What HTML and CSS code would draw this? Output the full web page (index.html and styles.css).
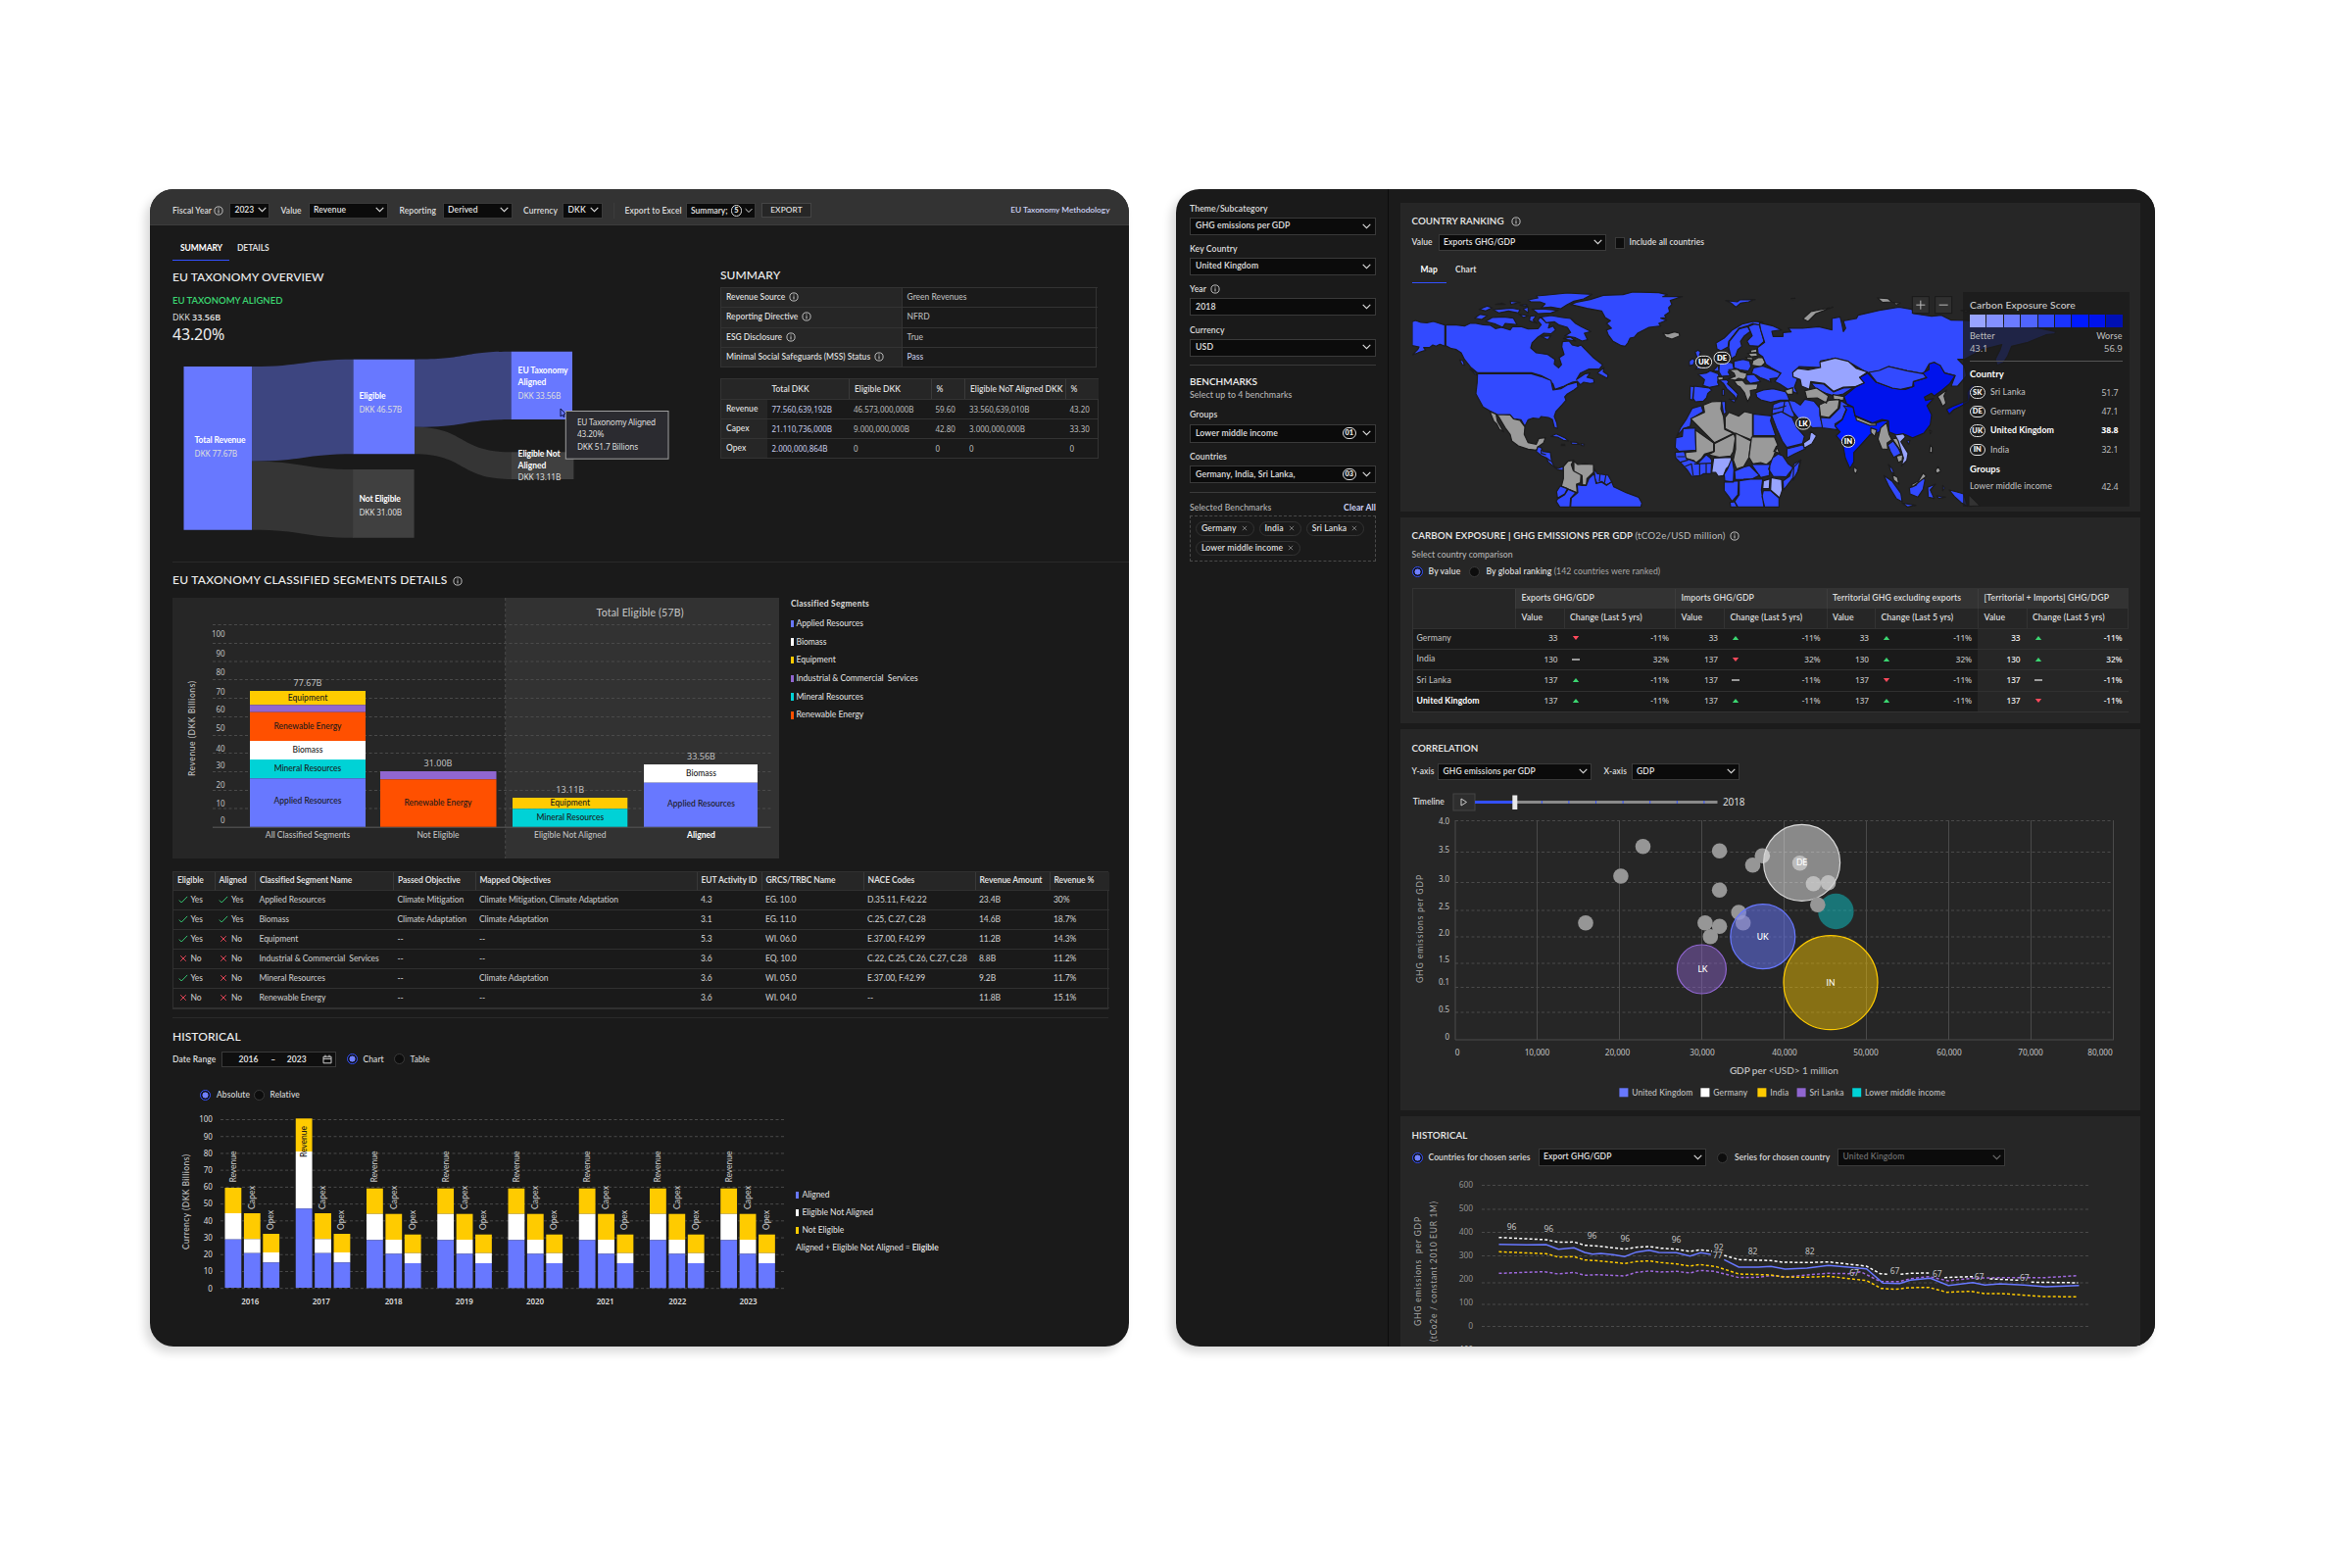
FILE: index.html
```html
<!DOCTYPE html>
<html lang="en">
<head>
<meta charset="utf-8">
<title>EU Taxonomy and GHG Exposure</title>
<link rel="stylesheet" href="styles.css">
</head>
<body>
<svg class="defs" aria-hidden="true">
  <symbol id="chev" viewBox="0 0 9 6"><path d="M.7.9 4.5 4.7 8.3.9" fill="none" stroke="currentColor" stroke-width="1.1"/></symbol>
  <symbol id="info" viewBox="0 0 10 10"><circle cx="5" cy="5" r="4.1" fill="none" stroke="currentColor" stroke-width=".9"/><path d="M5 4.3V7.4M5 2.5v1" stroke="currentColor" stroke-width="1"/></symbol>
  <symbol id="yes" viewBox="0 0 10 8"><path d="M.8 4.6 3.2 7 9.2.9" fill="none" stroke="#35c873" stroke-width="1"/></symbol>
  <symbol id="no" viewBox="0 0 10 8"><path d="M2.2 1.2 7.8 6.8M7.8 1.2 2.2 6.8" fill="none" stroke="#e04455" stroke-width="1"/></symbol>
  <symbol id="cal" viewBox="0 0 10 10"><path d="M1 2.2h8v6.6H1zM1 4.4h8M3 .6v2.2M7 .6v2.2" fill="none" stroke="currentColor" stroke-width="1"/></symbol>
  <symbol id="x" viewBox="0 0 6 6"><path d="M.8.8 5.2 5.2M5.2.8.8 5.2" stroke="#8a8a8a" stroke-width=".8"/></symbol>
</svg>
<main class="stage">

<section class="panel">
  <header class="topbar">
    <span class="lab">Fiscal Year <svg class="i"><use href="#info"/></svg></span><span class="sel">2023<svg class="c"><use href="#chev"/></svg></span>
    <span class="lab in">Value</span><span class="sel">Revenue<svg class="c"><use href="#chev"/></svg></span>
    <span class="lab in">Reporting</span><span class="sel">Derived<svg class="c"><use href="#chev"/></svg></span>
    <span class="lab in">Currency</span><span class="sel">DKK<svg class="c"><use href="#chev"/></svg></span>
    <i class="vbar"></i>
    <span class="lab">Export to Excel</span><span class="sel sum">Summary; <b class="ring">5</b><svg class="c"><use href="#chev"/></svg></span>
    <span class="btn">EXPORT</span>
    <a class="link">EU Taxonomy Methodology</a>
  </header>
  <div class="body">
    <nav class="tabs"><b class="on">SUMMARY</b><b>DETAILS</b></nav>
    <section class="overview">
      <div>
        <h2>EU TAXONOMY OVERVIEW</h2>
        <p class="green">EU TAXONOMY ALIGNED</p>
        <p class="dkk">DKK <b>33.56B</b></p>
        <p class="pct">43.20%</p>
        <svg class="sankey" viewBox="176 351 520 205">
          <path fill="#3d4580" d="M257 374C310 374 310 366.7 361 366.7V463.3C310 463.3 310 470.7 257 470.7ZM423 366.7C480 366.7 470 358.7 522 358.7V428C470 428 480 435.7 423 435.7Z"/>
          <path fill="#353535" d="M257 470.7C310 470.7 310 479 361 479V548.7C310 548.7 310 540.7 257 540.7ZM423 435.7C475 435.7 468 461.3 522 461.3V489C468 489 475 463.3 423 463.3Z"/>
          <path fill="#6878ff" d="M187.5 374H257V540.7H187.5ZM360.7 366.7H423V463.3H360.7ZM521.8 358.7H584V428H521.8Z"/>
          <path fill="#404040" d="M360.2 479H422.6V548.7H360.2ZM522 461.3H585.4V489H522Z"/>
          <g class="sk">
            <text x="198.5" y="451.5" class="m" textLength="52">Total Revenue</text><text x="198.5" y="465.7">DKK 77.67B</text>
            <text x="366.4" y="406.7" class="m">Eligible</text><text x="366.4" y="421.3">DKK 46.57B</text>
            <text x="366.4" y="511.7" class="m" textLength="42.5">Not Eligible</text><text x="366.4" y="526">DKK 31.00B</text>
            <text x="528.6" y="380.5" class="m" textLength="51">EU Taxonomy</text><text x="528.6" y="392.7" class="m">Aligned</text><text x="528.6" y="407.4">DKK 33.56B</text>
            <text x="528.6" y="465.5" class="m" textLength="43">Eligible Not</text><text x="528.6" y="478" class="m">Aligned</text><text x="528.6" y="490">DKK 13.11B</text>
          </g>
          <path d="M572 417v8l2-1.6 1.2 2.2 1-.6-1-2.2 2.2-.3z" fill="#6878ff" stroke="#0b1040" stroke-width="1"/>
          <rect x="577.3" y="419.5" width="104.7" height="48.7" fill="#2b2b30" stroke="#a0a0a0"/>
          <g class="sk"><text x="589" y="434" textLength="80">EU Taxonomy Aligned</text><text x="589" y="446.4">43.20%</text><text x="589" y="459" textLength="62">DKK 51.7 Billions</text></g>
        </svg>
      </div>
      <div class="sumcol">
        <h2>SUMMARY</h2>
        <div class="kv">
          <b>Revenue Source <svg class="i"><use href="#info"/></svg></b><span>Green Revenues</span>
          <b>Reporting Directive <svg class="i"><use href="#info"/></svg></b><span>NFRD</span>
          <b>ESG Disclosure <svg class="i"><use href="#info"/></svg></b><span>True</span>
          <b>Minimal Social Safeguards (MSS) Status <svg class="i"><use href="#info"/></svg></b><span class="lav">Pass</span>
        </div>
        <div class="fin">
          <b></b><b class="hd">Total DKK</b><b class="hd">Eligible DKK</b><b class="hd">%</b><b class="hd">Eligible NoT Aligned DKK</b><b class="hd">%</b>
          <b>Revenue</b><span class="lav">77.560,639,192B</span><span>46.573,000,000B</span><span>59.60</span><span>33.560,639,010B</span><span>43.20</span>
          <b>Capex</b><span class="lav">21.110,736,000B</span><span>9.000,000,000B</span><span>42.80</span><span>3.000,000,000B</span><span>33.30</span>
          <b>Opex</b><span class="lav">2.000,000,864B</span><span>0</span><span>0</span><span>0</span><span>0</span>
        </div>
      </div>
    </section>
    <section class="segments">
      <h2>EU TAXONOMY CLASSIFIED SEGMENTS DETAILS <svg class="i"><use href="#info"/></svg></h2>
      <div class="segrow">
        <svg id="segchart" class="segchart" viewBox="176 610 619 266"></svg>
        <ul class="legend">
          <li class="t">Classified Segments</li>
          <li class="blue">Applied Resources</li><li class="white">Biomass</li><li class="yellow">Equipment</li>
          <li class="purple">Industrial &amp; Commercial&nbsp; Services</li><li class="cyan">Mineral Resources</li><li class="orange">Renewable Energy</li>
        </ul>
      </div>
      <div class="seg" id="segtable"></div>
    </section>
    <section class="hist">
      <h2>HISTORICAL</h2>
      <div class="daterow"><span class="lab">Date Range</span><span class="date"><b>2016</b><b>–</b><b>2023</b><svg class="i"><use href="#cal"/></svg></span><i class="radio on"></i><span>Chart</span><i class="radio"></i><span>Table</span></div>
      <div class="absrow"><i class="radio on"></i><span>Absolute</span><i class="radio"></i><span>Relative</span></div>
      <div class="histrow">
        <svg id="histchart" class="histchart" viewBox="176 1126 630 220"></svg>
        <ul class="legend">
          <li class="blue">Aligned</li><li class="white">Eligible Not Aligned</li><li class="yellow">Not Eligible</li>
          <li class="plain">Aligned + Eligible Not Aligned = <b>Eligible</b></li>
        </ul>
      </div>
    </section>
  </div>
</section>

<section class="panel split">
  <aside class="side">
    <div class="field"><label>Theme/Subcategory</label><span class="sel">GHG emissions per GDP<svg class="c"><use href="#chev"/></svg></span></div>
    <div class="field"><label>Key Country</label><span class="sel">United Kingdom<svg class="c"><use href="#chev"/></svg></span></div>
    <div class="field"><label>Year &nbsp;<svg class="i"><use href="#info"/></svg></label><span class="sel">2018<svg class="c"><use href="#chev"/></svg></span></div>
    <div class="field"><label>Currency</label><span class="sel">USD<svg class="c"><use href="#chev"/></svg></span></div>
    <hr>
    <h3>BENCHMARKS</h3>
    <p>Select up to 4 benchmarks</p>
    <div class="field g"><label>Groups</label><span class="sel">Lower middle income<b class="ring">01</b><svg class="c"><use href="#chev"/></svg></span></div>
    <div class="field k"><label>Countries</label><span class="sel">Germany, India, Sri Lanka,<b class="ring">03</b><svg class="c"><use href="#chev"/></svg></span></div>
    <hr>
    <div class="selhead"><span>Selected Benchmarks</span><a>Clear All</a></div>
    <div class="chips"><span>Germany <svg><use href="#x"/></svg></span><span>India <svg><use href="#x"/></svg></span><span>Sri Lanka <svg><use href="#x"/></svg></span><span>Lower middle income <svg><use href="#x"/></svg></span></div>
  </aside>
  <div class="cards">
    <article class="card ranking">
      <h3>COUNTRY RANKING <svg class="i"><use href="#info"/></svg></h3>
      <div class="ctl"><span class="lab">Value</span><span class="sel w171">Exports GHG/GDP<svg class="c"><use href="#chev"/></svg></span><i class="box"></i><span class="lab">Include all countries</span></div>
      <nav class="tabs small"><b class="on">Map</b><b>Chart</b></nav>
      <div class="mapwrap">
        <svg class="map" viewBox="45 321 2196 663">
          <g class="land">
            <path d="M45 415L55 411 72 417 90 418 110 414 145 425V490L130 484 118 490 108 486 98 494 80 494 86 502 70 507 45 517 62 500 66 492 45 488Z"/>
            <path d="M148 425L175 424 205 428 222 420 240 420 262 424 285 426 300 436 318 432 345 440 352 430 380 430 400 437 430 436 440 424 430 412 436 400 450 412 466 420 462 434 476 428 484 440 470 452 448 450 430 462 412 480 408 495 425 510 460 515 482 530 480 545 493 556 502 546 495 525 510 515 503 492 505 476 525 474 535 486 553 490 562 486 575 500 600 525 628 547 618 560 585 560 560 572 548 592 575 574 590 572 580 585 600 590 602 602 590 604 570 600 560 608 550 597 535 600 510 612 482 622 476 605 460 590 440 580 410 571H245L225 555 205 530 195 510 180 500 165 497 148 488Z"/>
            <path d="M612 572L632 555 630 568 645 578 642 588Z"/><path d="M190 532l10 2 6 14-8-2zM222 560l14 8 14 14-12-6z"/>
            <path d="M245 574H410L440 583 470 595 476 624 500 620 520 608 550 600 552 615 540 624 520 636 512 645 516 655 505 668 485 690 480 705 488 725 490 742 480 738 474 714 462 708 440 705 434 712 415 710 400 715 390 735 378 715 355 712 345 700 305 699 283 688 262 676 248 650 240 635 244 600Z"/>
            <path class="n" d="M283 690L305 699 345 700 355 712 375 717 390 737 388 760 400 785 425 790 433 772 453 770 447 786 430 798 425 808 400 805 370 795 350 780 345 760 330 740 310 706 302 700 306 720 325 752 312 744 304 728 295 720Z"/>
            <path d="M425 812L430 797 440 800 445 812 468 815 472 842 480 858 492 864 508 858 507 870 490 868 462 845 456 832 440 824Z"/>
            <path d="M440 806V818L455 822M456 832 470 842" fill="none"/>
            <path d="M470 766L486 758 512 770 524 780 508 778 490 768ZM530 783L548 784 556 790 534 790ZM502 790h10v4h-10zM562 788l10 2-2 5-8-2z"/>
            <path class="n" d="M508 858L522 842 540 838 532 852 538 870 562 880 560 908 548 912 550 938 525 928 502 918 508 895Z"/>
            <path class="n" d="M540 842L552 852 572 850 600 852 600 876 580 895 578 915 566 914 565 886 540 872Z"/>
            <path d="M602 865L612 880 625 882 645 885 656 905 640 914 625 904 612 912 604 895Z"/><path d="M620 882L618 905M638 884 634 908" fill="none"/>
            <path d="M498 918L520 926 512 942 490 955 487 935ZM490 958L512 944 522 928 546 938 530 955 528 982H497L486 965Z"/>
            <path d="M566 916L578 916 586 895 602 880 608 910 625 906 640 916 656 905 662 920 700 938 738 952 748 970 745 982H530L532 955 552 938 550 914Z"/>
            <path d="M530 362L548 355 590 347 630 334 690 332 720 324 800 326 826 332 812 338 872 338 835 350 840 362 830 372 833 385 818 395 822 402 806 404 824 410 800 420 806 428 770 432 735 450 725 462 712 465 705 480 697 490 685 488 660 475 645 455 640 440 655 435 640 420 652 412 636 402 625 382 580 374Z"/>
            <path d="M400 348L430 342 425 336 460 333 520 327 596 331 570 345 540 352 520 362 500 375 470 370 440 372 452 360 436 354 408 354Z"/>
            <path d="M440 400L470 396 505 402 530 405 545 420 562 430 592 445 572 450 582 470 565 474 545 464 512 458 530 448 520 432 495 425 480 415 455 418ZM270 414L290 402 325 400 355 404 366 424 330 420 322 432 300 422ZM236 404L252 392 275 396 258 408ZM250 377L275 367 290 372 270 382ZM292 378L350 373 375 378 370 388 340 382 310 388ZM385 376L400 370 400 388ZM412 376L452 376 492 380 470 388 430 390ZM406 398L425 396 415 410 428 420 404 412ZM372 392L400 396 386 402ZM440 460L470 458 460 470ZM508 466L530 462 545 474 520 470ZM345 352l30 4-28 6z M300 362l20-4 10 4z M375 364l20-2 2 6z"/>
            <path class="n" d="M813 450L828 452 848 446 862 450 864 458 840 468 822 462Z"/>
            <path d="M1005 350L1040 354 1048 348 1095 347 1075 354 1050 358 1036 370 1022 358Z"/>
            <path d="M911 508L920 502 928 508 924 518 934 530 946 548 938 557 912 560 922 548 914 538 918 526ZM893 536L904 527 910 534 906 546 894 550Z"/>
            <path d="M975 480L1000 465 1025 440 1055 422 1090 414 1118 416 1105 426 1088 420 1070 428 1045 435 1030 455 1014 475 1012 492 990 504 978 498Z"/>
            <path d="M1014 494L1016 475 1032 455 1046 437 1072 430 1080 445 1062 458 1050 475 1054 490 1042 500 1035 520 1022 528Z"/>
            <path d="M1074 430L1092 422 1108 425 1122 475 1105 490 1078 488 1070 474 1086 458Z"/>
            <path class="n" d="M1080 502l20-4v10l-18 2zM1072 512l28-2 2 10-20 2zM1066 524l20 0 2 8-16-2zM1088 534L1105 524 1118 525 1126 540 1112 553 1085 548Z"/>
            <path d="M985 545L1000 536 1026 541 1030 560 1012 568 1018 580 992 582 984 568ZM1030 536L1058 530 1078 535 1082 552 1074 566 1048 562 1030 556ZM966 566L982 548 984 566Z"/>
            <path d="M920 576L945 572 958 565 982 574 984 582 980 600 984 610 955 616 935 610 940 592ZM908 612L955 618 962 624 950 634 946 648 936 658 912 660 905 650ZM896 612L908 614 903 655 895 652ZM984 594L1006 592 1014 598 1010 605 1026 620 1042 636 1038 652 1030 640 1008 620 998 604ZM1015 652l20 2-4 8zM994 622h6v18h-6z"/>
            <path class="n" d="M980 584h18l-2 8-14 2zM1014 562L1040 560 1050 568 1068 572 1072 580 1060 592 1044 588 1034 594 1012 590 1034 582 1030 572ZM1030 596L1056 594 1066 606 1078 606 1104 606 1100 622 1080 626 1082 640 1072 660 1062 632 1048 614 1040 610Z"/>
            <path d="M1068 578L1092 576 1112 598 1080 604 1068 592Z"/>
            <path d="M1084 572L1090 556 1118 550 1145 560 1172 572 1168 586 1140 590 1144 600 1126 592 1110 586 1098 578Z"/>
            <path d="M1097 632L1120 624 1150 620 1190 630 1200 655 1172 655 1142 662 1112 654 1100 646Z"/>
            <path d="M855 765L866 740 885 712 902 680 930 672 936 690 900 712 896 735 876 742Z"/>
            <path d="M852 770L872 766 874 742 912 740 914 808 862 812 850 800Z"/>
            <path class="n" d="M898 712L940 692 936 670 962 660 992 658 990 682 998 705 1002 745 1028 757 970 785Z"/>
            <path d="M992 660L1004 658 1004 680 1006 694 998 698Z"/>
            <path class="n" d="M1003 708L1015 692 1045 704 1062 690 1087 696V778L1030 755 1003 742Z"/>
            <path d="M1089 697L1145 703 1142 718 1158 764H1089Z"/>
            <path class="n" d="M912 746L968 786 968 812 940 820 930 834 912 848 908 840 880 832 882 815 914 812Z"/>
            <path class="n" d="M970 788L1030 758 1034 772 1028 812 1020 826 985 830 952 822 970 812Z"/>
            <path class="n" d="M1035 756L1082 780 1076 830 1060 858 1038 866 1028 838 1035 805Z"/>
            <path class="n" d="M1084 768H1154L1164 792 1148 836 1130 852 1112 846 1088 850 1076 830ZM1152 812L1160 796 1170 818Z"/>
            <path d="M850 815L878 812 884 834 908 842 920 848 945 822 956 830 962 838 960 880 938 880 928 886 900 888 888 870 870 850 852 832Z"/><path d="M866 845L890 838M880 858 900 850 905 885M925 850V885M945 850V880M908 850 960 848M856 828l24 0" fill="none"/>
            <path class="l" d="M968 832L1022 830 1022 850 1006 865 998 886 982 888 974 876 962 876Z"/>
            <path d="M1024 832L1030 868 1028 906 1002 902 1000 882 1010 866ZM1032 872L1060 860 1078 855 1108 885 1086 896 1034 898ZM1084 852L1140 852 1138 886 1112 892ZM1148 832L1165 820 1180 826 1196 850 1212 862 1190 890 1150 888 1136 866ZM1214 850L1235 838 1228 870 1205 900 1182 930 1180 902 1200 888ZM1046 902L1086 896 1118 897 1114 930 1122 982H1042L1032 965 1046 945ZM1000 906L1044 902 1042 945 1024 965 1014 950 1000 932ZM1120 932L1142 932 1168 955 1168 982H1124L1116 950ZM1018 968L1032 966 1040 982H1020Z"/>
            <path class="l" d="M1144 892L1176 898 1178 930 1170 954 1142 930ZM1120 902L1140 896 1138 926 1118 926Z"/>
            <path d="M1145 700L1175 690 1208 708 1222 738 1246 765 1240 788 1192 800 1178 780 1160 740Z"/>
            <path d="M1192 804L1240 792 1250 803 1215 820 1192 832Z"/>
            <path d="M1150 668L1170 660 1200 657 1206 675 1216 705 1204 706 1176 690 1146 698Z"/><path d="M1150 682L1165 680 1190 672M1185 660 1180 690" fill="none"/>
            <path d="M1108 418L1150 428 1176 440 1146 444 1150 460 1180 460 1180 448 1205 446 1196 434 1240 435 1290 430 1330 440 1330 405 1355 400 1360 420 1365 445 1372 435 1365 412 1405 405 1410 395 1475 380 1535 370 1575 377 1580 390 1635 398 1665 395 1695 410 1740 411 1800 416 1880 422 1950 432 2015 445 2012 452 1985 455 1930 478 1880 490 1868 520 1855 540 1836 548 1830 530 1845 500 1850 485 1790 500 1735 530 1715 530 1735 550 1742 580 1715 612 1695 612 1707 580 1675 572 1645 540 1625 548 1610 575 1560 565 1505 552 1475 565 1440 572 1380 537 1340 527 1295 535 1295 555 1230 552 1210 572 1225 588 1215 615 1225 635 1195 622 1170 605 1155 598 1174 572 1144 556 1128 545 1118 522 1104 512 1102 494 1124 478 1112 440Z"/>
          </g>
          <g class="land" transform="translate(1215 240)">
            <path class="n" d="M-30 385l25-8 0 20-16 0z"/>
            <path d="M-18 415L0 418 18 430 32 412 60 418 78 440 78 462 88 498 56 500 38 486 16 476-6 448Z"/>
            <path class="l" d="M-5 330L10 318 42 322 80 315 78 298 125 286 165 296 190 318 224 329 200 345 214 362 185 374 150 375 120 388 92 364 50 358 46 382 22 372 18 352-4 344Z"/>
            <path d="M50 362L90 366 120 390 150 378 182 376 150 396 122 402 96 394 66 380Z"/>
            <path class="n" d="M32 386L68 378 104 402 98 424 70 408 38 410ZM118 398L152 404 150 416 120 412ZM76 430L108 415 138 413 134 440 106 468 80 464Z"/>
            <path d="M80 468L108 470 138 440 142 416 164 430 146 474 124 488 132 506 86 500Z"/>
            <path class="i" d="M150 432L180 436 186 464 232 492 270 478 288 478 262 512 232 520 205 550 182 575 182 604 170 624 156 592 148 548 128 524 140 512 124 494 146 476 160 444Z"/>
            <path class="n" d="M188 466L236 486 250 486 250 492 230 492 190 476ZM234 500L252 506 246 526 234 514ZM182 618l11 10-4 12-7-6z"/>
            <path class="d" d="M224 332L250 360 300 378 340 382 366 372 364 358 405 346 386 335 412 322 412 304 428 299 446 308 460 332 492 340 476 364 450 386 428 402 420 394 398 406 402 416 426 410 406 432 420 460 416 490 396 516 362 530 338 520 314 522 290 512 288 478 268 474 240 485 186 462 180 436 160 426 152 404 186 376 214 362 200 346Z"/>
            <path d="M228 330L260 324 288 312 345 325 395 334 404 346 364 358 362 374 325 382 300 378 252 360Z"/>
            <path class="n" d="M438 404L466 384 458 402 464 424 454 434 446 416ZM264 500L282 484 290 520 298 536 284 546 286 566 268 564 256 534ZM300 534L318 530 334 566 324 568ZM312 586L332 582 330 600 318 606ZM414 506l6 4-4 8zM416 552l6 8 0 16-8-2zM440 618l8 14-12 8-4-10zM300 642L316 652 320 672 304 660Z"/>
            <path class="d" d="M466 443L484 434 514 422 530 416 528 392 540 372 552 360 545 386 534 420 508 434 488 444 474 458Z"/>
            <path d="M286 552L302 540 318 562 326 578 304 590 294 572ZM288 612L300 625 306 642 296 634ZM344 540l10-2-4 12z"/>
            <path class="l" d="M308 522L334 518 340 528 326 542 348 578 344 600 328 616 334 592 318 540ZM50 510L68 524 54 548 30 562 28 546 46 534Z"/>
            <path d="M274 646L300 664 326 700 330 726 312 716 290 680ZM330 730L372 737 346 742ZM352 684L372 676 388 652 400 658 394 688 378 712 354 702ZM408 682L432 672 416 690 428 716 410 712ZM454 676l6 8-6 8zM436 708l26 4-20 4zM474 690L498 696 518 702 530 740 510 728 490 710Z"/>
            <path class="n" d="M358 674L380 662 394 638 404 648 378 668 362 680ZM534 704L568 738 534 740ZM26 166L50 144 118 130 66 150 42 174ZM254 102L286 104 298 114 270 116ZM302 116l22 2-12 6zM510 140l34 0-20 5zM-10 104l12-1-6 4z"/>
            <path d="M-2 620L18 600 10 634-4 660Z"/>
          </g>
          <g class="pins">
            <rect x="913" y="520" width="49" height="36" rx="18"/><text x="937.5" y="546">UK</text>
            <rect x="969" y="508" width="49" height="36" rx="18"/><text x="993.5" y="534">DE</text>
            <rect x="1220" y="708" width="44" height="36" rx="18"/><text x="1242" y="734">LK</text>
            <rect x="1360" y="763" width="40" height="36" rx="18"/><text x="1380" y="789">IN</text>
          </g>
          <g class="zoombtn"><rect x="1576" y="338" width="51" height="51"/><path d="M1588 363.500h27M1601.500 350v27"/><rect x="1646" y="338" width="51" height="51"/><path d="M1658 363.500h27"/></g>
        </svg>
        <div class="score">
          <h4>Carbon Exposure Score</h4>
          <div class="ramp"><i></i><i></i><i></i><i></i><i></i><i></i><i></i><i></i><i></i></div>
          <div class="bw"><span>Better</span><span>Worse</span></div>
          <div class="bw nums"><span>43.1</span><span>56.9</span></div>
          <h5>Country</h5>
          <div class="cr"><b class="ring">SK</b><span>Sri Lanka</span><em>51.7</em></div>
          <div class="cr"><b class="ring">DE</b><span>Germany</span><em>47.1</em></div>
          <div class="cr bold"><b class="ring">UK</b><span>United Kingdom</span><em>38.8</em></div>
          <div class="cr"><b class="ring">IN</b><span>India</span><em>32.1</em></div>
          <h5>Groups</h5>
          <div class="cr"><span>Lower middle income</span><em>42.4</em></div>
        </div>
      </div>
    </article>

    <article class="card carbon">
      <h3>CARBON EXPOSURE | GHG EMISSIONS PER GDP <span>(tCO2e/USD million)</span> <svg class="i"><use href="#info"/></svg></h3>
      <p>Select country comparison</p>
      <div class="radios"><i class="radio on"></i><b>By value</b><i class="radio"></i><b>By global ranking <span>(142 countries were ranked)</span></b></div>
      <div class="ct" id="carbontable"></div>
    </article>

    <article class="card corr">
      <h3>CORRELATION</h3>
      <div class="ctl"><span class="lab">Y-axis</span><span class="sel w157">GHG emissions per GDP<svg class="c"><use href="#chev"/></svg></span><span class="lab xa">X-axis</span><span class="sel w111">GDP<svg class="c"><use href="#chev"/></svg></span></div>
      <svg id="corrchart" class="corrchart" viewBox="1440 806 734 320"></svg>
    </article>

    <article class="card last">
      <h3>HISTORICAL</h3>
      <div class="ctl"><i class="radio on"></i><span class="lab lg">Countries for chosen series</span><span class="sel w172">Export GHG/GDP<svg class="c"><use href="#chev"/></svg></span><i class="radio r2"></i><span class="lab lh">Series for chosen country</span><span class="sel w172 dim">United Kingdom<svg class="c"><use href="#chev"/></svg></span></div>
      <svg id="linechart" class="linechart" viewBox="1440 1192 734 190"></svg>
    </article>
  </div>
</section>
</main>
<script src="charts.js"></script>
</body>
</html>
```

FILE: styles.css
```css
* { box-sizing: border-box; }
body { margin: 0; background: #fff; font: 500 8.5px/1.2 Lato, "Noto Sans", sans-serif; color: #ddd; letter-spacing: .08px; }
h2, h3, h4, h5, p, ul { margin: 0; padding: 0; font-weight: 500; }
ul { list-style: none; }
svg { display: block; }
.defs { position: absolute; width: 0; height: 0; }
.stage { display: flex; gap: 48px; padding: 193px 152px 0 153px; height: 1600px; align-items: flex-start; }
.panel { width: 999px; height: 1180.5px; border-radius: 24px; background: #1a1a1a; overflow: hidden; box-shadow: -5px 6px 10px rgba(0,0,0,.15); flex: none; }
.panel.split { display: flex; }

svg.i { display: inline-block; width: 10px; height: 10px; vertical-align: -2px; color: #ccc; }
svg.c { width: 9px; height: 6px; margin-left: auto; flex: none; color: #ddd; }
.lab { font-weight: 600; color: #ddd; white-space: nowrap; }
.sel { display: flex; align-items: center; height: 16.500px; background: #0b0b0b; border: 1px solid #3a3a3a; padding: 0 3px 1px 4.500px; white-space: nowrap; font-weight: 600; color: #e0e0e0; letter-spacing: .12px; }
.ring { display: inline-flex; align-items: center; justify-content: center; min-width: 11.500px; height: 11.500px; padding: 0 2px; border: 1px solid #ddd; border-radius: 7px; font-size: 7.400px; font-weight: 800; line-height: 1; letter-spacing: 0; flex: none; }

/* EU taxonomy: filter bar */
.topbar { height: 36.500px; background: #333; border-bottom: 1px solid #3d3d3d; padding: 8px 19.500px 0 23px; display: grid; align-items: center; grid-template-columns: 58px 41px 39.500px 81.500px 55.500px 71px 51.500px 40.500px 23px 62.500px 71px 57px 1fr; }
.topbar .in { padding-left: 11.500px; }
.topbar .sel:nth-child(2) { letter-spacing: 0; padding-right: 2px; }
.vbar { width: 1px; height: 16px; background: #3c3c3c; margin-left: 11px; }
.sel.sum { padding: 0 2px 0 4px; letter-spacing: 0; }
.sum .ring { margin-left: 3px; padding: 0; }
.sum svg.c { width: 8px; }
.btn { width: 51px; height: 15px; margin-left: 6px; background: #262626; border: 1px solid #454545; text-align: center; line-height: 13px; font-weight: 600; font-size: 8.300px; }
.link { justify-self: end; color: #cdd2f5; font-weight: 600; font-size: 8.300px; letter-spacing: 0; }
.body { padding: 12.500px 21px 0 23px; }
.tabs { display: flex; height: 24px; }
.tabs b { padding: 0 8px; line-height: 22px; font-weight: 700; letter-spacing: -.1px; }
.tabs .on { width: 58px; border-bottom: 1.500px solid #3350ff; color: #fff; }
h2 { font-size: 12px; line-height: 20px; color: #eee; letter-spacing: .08px; white-space: nowrap; }
h2 svg.i { margin-left: 2px; }

.overview { display: grid; grid-template-columns: 559px 386px; height: 307.500px; border-bottom: 1px solid #2a2a2a; margin-right: -21px; }
.overview h2 { margin-top: 7px; }
.green { color: #3bd671; font-size: 9.500px; font-weight: 600; line-height: 16px; margin-top: 6px; letter-spacing: 0; }
.dkk { font: 9px/14px "Noto Sans", sans-serif; margin-top: 2px; letter-spacing: 0; }
.dkk b { font-weight: 600; }
.pct { font: 16px/20px "Noto Sans", sans-serif; color: #eee; letter-spacing: -.2px; }
.sankey { width: 520px; height: 205px; }
.sk text { font: 8.300px "Noto Sans", sans-serif; fill: #ddd; letter-spacing: -.15px; }
.sk .m { font-family: Lato, sans-serif; font-weight: 700; fill: #fff; font-size: 8.500px; letter-spacing: 0; }
.overview .sumcol h2 { margin-top: 5px; }
.kv { display: grid; grid-template-columns: 184.500px 199.500px; margin-top: 2.300px; width: 384px; height: 81.500px; grid-auto-rows: 1fr; border: 1px solid #333; border-top: 0; }
.kv > * { border-top: 1px solid #333; padding: 0 5px 1px; display: flex; align-items: center; gap: 4px; font-weight: 500; color: #bbb; letter-spacing: 0; }
.kv b { background: #262626; font-weight: 600; color: #ddd; border-right: 1px solid #333; }
.kv .lav, .fin .lav { color: #c5cae9; }
.fin { display: grid; grid-template-columns: 46.500px 83.500px 83.500px 34.500px 102.500px 34px; grid-template-rows: 21px repeat(3, 20px); width: 386px; margin-top: 11.500px; border: 1px solid #333; border-top: 0; }
.fin > * { border-top: 1px solid #333; padding: 0 5px 1px; display: flex; align-items: center; white-space: nowrap; font: 8px "Noto Sans", sans-serif; letter-spacing: -.03px; color: #bbb; }
.fin b { background: #262626; font: 600 8.500px Lato, sans-serif; color: #ddd; letter-spacing: 0; }
.fin .hd + .hd { border-left: 1px solid #3a3a3a; }

/* classified segments */
.segments { height: 465.500px; border-bottom: 1px solid #2a2a2a; padding-top: 8.500px; }
.segments h2 { letter-spacing: .25px; }
.segrow { display: flex; margin-top: 8px; gap: 12px; }
.segchart { width: 619px; height: 266px; flex: none; }
.legend li { height: 18.700px; line-height: 18.700px; display: flex; align-items: center; gap: 3px; white-space: nowrap; font-weight: 500; letter-spacing: -.02px; }
.legend li:not(.t):not(.plain)::before { content: ""; width: 2.500px; height: 7.500px; background: #fff; }
.legend .t { height: 20px; margin-top: -4px; font-weight: 700; margin-bottom: 1px; letter-spacing: .25px; }
.legend .blue::before { background: #6878ff !important; }
.legend .yellow::before { background: #ffcb00 !important; }
.legend .purple::before { background: #9066d0 !important; }
.legend .cyan::before { background: #00d2d6 !important; }
.legend .orange::before { background: #ff5000 !important; }
.seg { margin-top: 12.500px; display: grid; grid-template-columns: 41.500px 41.500px 141px 83.500px 226px 66px 104px 114px 76px 61.500px; grid-template-rows: 19.500px; grid-auto-rows: 20px; border: 1px solid #303030; width: 955px; }
.seg > * { padding: 0 4.500px 1px; display: flex; align-items: center; gap: 3px; border-bottom: 1px solid #303030; white-space: nowrap; color: #c4c4c4; letter-spacing: -.08px; }
.seg b { background: #262626; color: #ddd; font-weight: 700; border-left: 1px solid #383838; padding-left: 4px; }
.seg b:first-child { border-left: 0; }
.seg svg { width: 10px; height: 8px; }
text { fill: #c0c0c0; }
.ax { font: 8px "Noto Sans", sans-serif; letter-spacing: -.1px; }
.tx { font: 500 8.500px Lato, sans-serif; letter-spacing: 0; }
.lt { font-weight: 400; fill: #a8a8a8; }
.dk { fill: #1a1a1a; }
.mid { text-anchor: middle; }
.end { text-anchor: end; }
.grid { stroke: #4a4a4a; stroke-width: 1; stroke-dasharray: 3 2.500; fill: none; }

/* left history */
.hist { padding-top: 9px; }
.daterow, .absrow, .ctl, .radios { display: flex; align-items: center; white-space: nowrap; }
.daterow { margin-top: 4.500px; height: 16.500px; }
.daterow .lab { width: 49.500px; }
.date { width: 117px; height: 16.500px; background: #0f0f0f; border: 1px solid #3a3a3a; display: flex; align-items: center; padding: 0 3px 0 17px; margin-right: 11px; }
.date b { font-weight: 700; width: 33px; } .date b:nth-child(2) { width: 16.500px; } .date b:nth-child(3) { width: 36px; } .date svg.i { margin-left: auto; flex: none; }
.radio { width: 11px; height: 11px; border-radius: 50%; border: 1px solid #3a3a3a; background: #0d0d0d; flex: none; }
.radio.on { border-color: #3350ff; background: radial-gradient(circle, #7080ff 0 2.800px, #0d0d0d 3.300px); }
.daterow > span:nth-child(4) { margin: 0 12px 0 6px; width: 19px; }
.daterow > span:nth-child(6) { margin-left: 6px; }
.absrow { margin-top: 20.500px; height: 16px; padding-left: 28px; }
.absrow span { margin: 0 0 0 6px; width: 37.500px; }
.histrow { display: flex; gap: 6px; }
.histchart { width: 630px; height: 220px; }
.histrow .legend { padding-top: 85px; }
.histrow .legend li { height: 18px; gap: 4px; letter-spacing: -.04px; }
.histrow .legend .plain { gap: 2px; }

/* right panel sidebar */
.side { width: 216.500px; flex: none; border-right: 1px solid #0c0c0c; padding: 13px 11.500px 0 14px; }
.field { height: 41.200px; }
.field label { display: block; height: 16px; line-height: 14px; font-weight: 600; font-size: 8.700px; }
.side .sel { height: 18px; padding: 0 4px 1px 5px; font-size: 8.700px; }
.side .ring { margin-left: auto; margin-right: 6px; min-width: 14.500px; height: 12.500px; padding: 0 1px; }
.side .ring + svg.c { margin-left: 0; }
.side hr { border: 0; border-top: 1px solid #3a3a3a; margin: 1.500px 0 0; }
.side h3 { margin-top: 9px; line-height: 14px; font-size: 10px; font-weight: 600; color: #eee; letter-spacing: 0; }
.side p { line-height: 14px; color: #b5b5b5; font-size: 8.800px; }
.side .g { margin-top: 6px; height: 43px; } .side .g label { height: 17px; } .side .g .sel { height: 18.500px; }
.side .k { height: 41px; }
.selhead { display: flex; justify-content: space-between; margin-top: 8px; line-height: 14px; color: #b5b5b5; font-size: 8.700px; }
.selhead a { color: #cdd2f5; font-weight: 700; }
.chips { height: 47px; margin-top: 1px; border: 1px dashed #4a4a4a; padding: 5px; display: flex; flex-wrap: wrap; gap: 4.500px 5px; align-content: flex-start; }
.chips span { height: 15.500px; border: 1px solid #333; border-radius: 8px; padding: 0 6px 1px 5px; display: flex; align-items: center; gap: 5px; font-weight: 600; font-size: 8.700px; letter-spacing: .08px; }
.chips svg { width: 6px; height: 6px; }

/* cards */
.cards { flex: 1; min-width: 0; padding: 14px 15px 0 12px; display: flex; flex-direction: column; gap: 6px; background: #1b1b1b; }
.card { background: #262626; flex: none; padding-left: 12px; }
.card h3 { font-size: 9.800px; line-height: 14px; font-weight: 600; color: #e8e8e8; letter-spacing: .03px; white-space: nowrap; }
.card h3 svg.i { margin-left: 5px; }
.ranking { height: 314.500px; padding-top: 11px; }
.ctl { height: 18px; }
.ranking .ctl { margin-top: 6.500px; }
.ranking .ctl > .lab:first-child { width: 27px; }
.ctl .sel { height: 17.500px; }
.w171 { width: 171.500px; } .w157 { width: 157px; } .w111 { width: 110.500px; } .w172 { width: 171px; }
.box { width: 10.500px; height: 12px; background: #0d0d0d; border: 1px solid #3a3a3a; margin: 0 4.500px 0 8.500px; }
.tabs.small { margin-top: 7.500px; height: 24.500px; }
.tabs.small .on { width: 35.500px; } .tabs.small b { padding: 0 9px; letter-spacing: .1px; }
.mapwrap { position: relative; margin-top: 8.500px; width: 732px; height: 221px; }
.map { width: 732px; height: 221px; }
.land path { stroke: #1c1c1c; stroke-width: 3.500; stroke-linejoin: round; fill: #324aff; }
.land path[fill=none] { fill: none; }
.land .n { fill: #9a9a9a; } .land .l { fill: #98a4ff; } .land .d { fill: #0013ec; } .land .i { fill: #001cff; }
.pins rect { fill: #1c1c1c; stroke: #e8e8e8; stroke-width: 3; }
.pins text { font: 800 23px Lato, sans-serif; fill: #fff; text-anchor: middle; letter-spacing: 0; }
.zoombtn rect { fill: #303030; stroke: #1a1a1a; stroke-width: 3; } .zoombtn path { stroke: #bbb; stroke-width: 3; }
.score { position: absolute; right: 0; top: .5px; width: 170px; height: 219.500px; background: rgba(27,27,27,.81); padding: 5px 7px 0 7.500px; color: #bbb; }
.score h4 { margin: 0; font-size: 10.300px; line-height: 16px; font-weight: 500; letter-spacing: .1px; color: #ccc; }
.ramp { display: grid; grid-template-columns: repeat(9, 1fr); gap: 1px; height: 12.500px; margin-top: 2.500px; }
.ramp i:nth-child(1) { background: #98a4ff; } .ramp i:nth-child(2) { background: #8390ff; } .ramp i:nth-child(3) { background: #6b7bff; }
.ramp i:nth-child(4) { background: #5065ff; } .ramp i:nth-child(5) { background: #324aff; } .ramp i:nth-child(6) { background: #1a33ff; }
.ramp i:nth-child(7) { background: #001aff; } .ramp i:nth-child(8) { background: #0013ec; } .ramp i:nth-child(9) { background: #0010b4; }
.bw { display: flex; justify-content: space-between; line-height: 14px; margin-top: 2.500px; font-size: 9px; }
.nums { margin-top: -1px; padding-bottom: 4.500px; font: 9.500px/14px "Noto Sans", sans-serif; letter-spacing: -.1px; border-bottom: 1px solid #555; }
.score h5 { font-size: 9.500px; line-height: 16px; font-weight: 700; color: #fff; margin-top: 5.500px; margin-bottom: 1px; }
.cr { display: flex; align-items: center; height: 19.400px; padding-right: 4px; font-size: 8.800px; }
.cr .ring { min-width: 15.500px; height: 12.500px; margin-right: 5.500px; color: #eee; padding: 0 1px; background: #1c1c1c; }
.cr span { flex: 1; }
.cr em { font: 8.800px "Noto Sans", sans-serif; letter-spacing: -.1px; }
.cr.bold, .cr.bold em { font-weight: 700; color: #fff; }
.score .cr + h5 { margin-top: 2.500px; margin-bottom: 0; }

.carbon { height: 210.500px; padding-top: 11px; }
.carbon h3 { letter-spacing: .12px; }
.carbon h3 span { font-weight: 400; color: #bbb; letter-spacing: .18px; }
.carbon h3 svg.i { margin-left: 2px; }
.carbon p { margin-top: 6px; line-height: 14px; font-size: 8.700px; color: #b5b5b5; }
.radios { margin-top: 4px; height: 13px; }
.radios b { margin: 0 9px 0 6px; font-weight: 600; font-size: 8.700px; } .radios b span { font-weight: 400; color: #aaa; }
.ct { margin-top: 10px; width: 731.500px; display: grid; border: 1px solid #333; grid-template-columns: 104.500px 49.500px 113.500px 50px 104.500px 49.500px 105px 49.500px 104px; grid-template-rows: 20px 20.500px; grid-auto-rows: 21.200px; }
.ct > * { display: flex; align-items: center; padding: 0 6px 1px 5.500px; white-space: nowrap; font-size: 8.700px; }
.ct .h1 { grid-column: span 2; background: #333; border-left: 1px solid #3d3d3d; font-weight: 600; }
.ct .h0 { grid-row: span 2; }
.ct .h2 { border-left: 1px solid #333; font-weight: 600; }
.ct .r { background: #1a1a1a; border-top: 1px solid #303030; color: #bbb; padding-left: 4px; padding-bottom: 1.500px; }
.ct .n { justify-content: flex-end; font-family: "Noto Sans", sans-serif; font-size: 8.300px; letter-spacing: -.1px; }
.ct .hl { background: #262626; color: #eee; font-weight: 500; }
.ct .g { justify-content: space-between; padding-left: 8px; }
.ct .uk:first-child, .ct .uk { font-weight: 700; color: #fff; }
.ct svg { width: 8px; height: 6px; }

.corr { height: 389px; padding-top: 11.500px; }
.corr .ctl { margin-top: 9px; } .corr .ctl .lab:first-child { width: 26.500px; }
.corr .xa { margin-left: 12.500px; width: 28px; }
.corrchart { width: 734px; height: 320px; margin-top: 9px; }
.last { height: 260px; padding-top: 11.500px; }
.last .ctl { margin-top: 7.500px; }
.last .lg { margin-left: 6px; width: 112px; } .last .r2 { margin-left: 11.500px; } .last .lh { margin-left: 7px; width: 105px; }
.dim, .dim svg.c { color: #6e6e6e; }
.linechart { width: 734px; height: 190px; margin-top: 2.500px; }
.ln path { fill: none; stroke-width: 1.500; vector-effect: non-scaling-stroke; }
.ln .dash { stroke-dasharray: 3 2.200; }
```

FILE: charts.js
```js
const $ = id => document.getElementById(id);
const BLUE = '#6878ff', WHITE = '#fff', YELLOW = '#ffcb00', PURPLE = '#9066d0', CYAN = '#00d2d6', ORANGE = '#ff5000';
const rect = (x, y, w, h, f) => `<rect x="${x}" y="${y}" width="${w}" height="${h}" fill="${f}"/>`;
const text = (x, y, s, c, extra = '') => `<text x="${x}" y="${y}" class="${c}" ${extra}>${s}</text>`;
const rot = (x, y, s, c, len) => `<text transform="translate(${x} ${y}) rotate(-90)" class="${c}"${len ? ` textLength="${len}"` : ''}>${s}</text>`;
const grid = (x1, x2, ys) => `<path class="grid" d="${ys.map(y => `M${x1} ${y}H${x2}`).join('')}"/>`;

// Classified segments
(() => {
  let s = rect(176, 610, 340, 266, '#262626') + rect(515.7, 610, 280, 266, '#323232');
  s += grid(217, 787, [637.5, 656.5, 675, 693.5, 712.5, 731.5, 750.5, 768.5, 787.5, 806.5, 825]);
  s += '<path class="grid" d="M515.700 610V876"/>';
  s += '<path d="M217 844.300H786.500" stroke="#4a4a4a" stroke-width="1.500"/>';
  [646.7, 666.7, 686.3, 706, 724, 743, 764, 781.3, 800.7, 820, 836.7].forEach((y, i) => s += text(229.5, y + 2.8, 100 - i * 10, 'ax end'));
  const bars = [
    [255, 118, 314, 'All Classified Segments', '77.67B', [[705, 719.3, YELLOW, 'Equipment'], [719.3, 726.7, PURPLE], [726.7, 756, ORANGE, 'Renewable Energy'], [756, 775, WHITE, 'Biomass'], [775, 794.3, CYAN, 'Mineral Resources'], [794.3, 843.7, BLUE, 'Applied Resources', -2]]],
    [388, 118.5, 447, 'Not Eligible', '31.00B', [[787, 795.3, PURPLE], [795.3, 843.7, ORANGE, 'Renewable Energy']]],
    [523, 117.3, 581.8, 'Eligible Not Aligned', '13.11B', [[814, 825.3, YELLOW, 'Equipment'], [825.3, 843.7, CYAN, 'Mineral Resources']]],
    [657, 116, 715.5, 'Aligned', '33.56B', [[780, 798.7, WHITE, 'Biomass'], [798.7, 843.7, BLUE, 'Applied Resources', -1]]]
  ];
  bars.forEach(([x, w, cx, name, val, parts]) => {
    s += text(cx, parts[0][0] - 5, val, 'ax mid', 'style="font-size:9px;letter-spacing:0"');
    parts.forEach(([a, b, f, t, dy = 0]) => { s += rect(x, a, w, b - a, f); if (t) s += text(cx, (a + b) / 2 + 2.5 + dy, t, 'tx dk mid'); });
    s += text(cx, 854.7, name, 'tx mid', name === 'Aligned' ? 'style="font-weight:700;fill:#fff"' : '');
  });
  s += text(653, 629, 'Total Eligible (57B)', 'tx mid', 'style="font-size:10.500px" textLength="89"');
  s += rot(199, 792, 'Revenue (DKK Billions)', 'tx', 97);
  $('segchart').innerHTML = s;
})();

// Segments table
(() => {
  const heads = ['Eligible', 'Aligned', 'Classified Segment Name', 'Passed Objective', 'Mapped Objectives', 'EUT Activity ID', 'GRCS/TRBC Name', 'NACE Codes', 'Revenue Amount', 'Revenue %'];
  const rows = [
    [1, 1, 'Applied Resources', 'Climate Mitigation', 'Climate Mitigation, Climate Adaptation', '4.3', 'EG. 10.0', 'D.35.11, F.42.22', '23.4B', '30%'],
    [1, 1, 'Biomass', 'Climate Adaptation', 'Climate Adaptation', '3.1', 'EG. 11.0', 'C.25, C.27, C.28', '14.6B', '18.7%'],
    [1, 0, 'Equipment', '--', '--', '5.3', 'WI. 06.0', 'E.37.00, F.42.99', '11.2B', '14.3%'],
    [0, 0, 'Industrial &amp; Commercial&nbsp; Services', '--', '--', '3.6', 'EQ. 10.0', 'C.22, C.25, C.26, C.27, C.28', '8.8B', '11.2%'],
    [1, 0, 'Mineral Resources', '--', 'Climate Adaptation', '3.6', 'WI. 05.0', 'E.37.00, F.42.99', '9.2B', '11.7%'],
    [0, 0, 'Renewable Energy', '--', '--', '3.6', 'WI. 04.0', '--', '11.8B', '15.1%']
  ];
  const flag = v => `<svg><use href="#${v ? 'yes' : 'no'}"/></svg>${v ? 'Yes' : 'No'}`;
  $('segtable').innerHTML = heads.map(h => `<b>${h}</b>`).join('') + rows.map(r => r.map((c, i) => `<span>${i < 2 ? flag(c) : c}</span>`).join('')).join('');
})();

// Left history chart
(() => {
  const ys = [...Array(11)].map((_, i) => 1142.5 + i * 17.22);
  let s = grid(225, 801, ys);
  ys.forEach((y, i) => s += text(216.7, y + 2.8, 100 - i * 10, 'ax end', 'style="fill:#ddd"'));
  const years = [255.3, 327.8, 401.6, 473.7, 546, 617.6, 691.3, 763.5];
  years.forEach((cx, k) => {
    const x = 229.5 + k * 72.25, d = k > 1 ? .7 : 0;
    const rev = k === 1 ? [1141.3, 1175, 1233.3] : [1212 + d, 1238 + d, 1264.7 + d];
    [rev, [1238 + d, 1264.3 + d, 1278.7 + d], [1259 + d, 1278 + d, 1288.3 + d]].forEach((p, j) => {
      const bx = x + j * 19.4;
      s += rect(bx, p[0], 16.8, p[1] - p[0], YELLOW) + rect(bx, p[1], 16.8, p[2] - p[1], WHITE) + rect(bx, p[2], 16.8, 1314 + d / 2 - p[2], BLUE);
    });
    s += k === 1 ? rot(x + 11.300, 1181, 'Revenue', 'tx dk', 32) : rot(x + 11.300, 1206.500, 'Revenue', 'tx', 32);
    s += rot(x + 30.700, 1234, 'Capex', 'tx', 24) + rot(x + 49.700, 1255, 'Opex', 'tx', 20);
    s += text(cx, 1330.5, 2016 + k, 'ax mid', 'style="font-weight:600;fill:#ddd"');
  });
  s += rot(192.5, 1275, 'Currency (DKK Billions)', 'tx', 97);
  $('histchart').innerHTML = s;
})();

// Carbon exposure table
(() => {
  const mark = {
    u: '<svg viewBox="0 0 8 6"><path d="M4 1 7.200 5H.8z" fill="#3bd671"/></svg>',
    d: '<svg viewBox="0 0 8 6"><path d="M4 5 7.200 1H.8z" fill="#ff4a5c"/></svg>',
    f: '<svg viewBox="0 0 8 6"><path d="M0 3H8" stroke="#eee" stroke-width="1.200"/></svg>'
  };
  const heads = ['Exports GHG/GDP', 'Imports GHG/GDP', 'Territorial GHG excluding exports', '[Territorial + Imports] GHG/DGP'];
  const rows = [
    ['Germany', '-11%', [33, 'd'], [33, 'u'], [33, 'u'], [33, 'u']],
    ['India', '32%', [130, 'f'], [137, 'd'], [130, 'u'], [130, 'u']],
    ['Sri Lanka', '-11%', [137, 'u'], [137, 'f'], [137, 'd'], [137, 'f']],
    ['United Kingdom', '-11%', [137, 'u'], [137, 'u'], [137, 'u'], [137, 'd']]
  ];
  let s = '<span class="h0"></span>' + heads.map(h => `<span class="h1">${h}</span>`).join('');
  s += heads.map(() => '<span class="h2">Value</span><span class="h2">Change (Last 5 yrs)</span>').join('');
  rows.forEach(([n, ch, ...v], i) => {
    s += `<span class="r ${i === 3 ? 'uk' : ''}">${n}</span>`;
    v.forEach(([a, m], j) => { const h = j === 3 ? 'hl' : ''; s += `<span class="r n ${h}">${a}</span><span class="r n g ${h}">${mark[m]}${ch}</span>`; });
  });
  $('carbontable').innerHTML = s;
})();

// Correlation
(() => {
  let s = text(1440.7, 821, 'Timeline', 'tx', 'style="font-weight:600;fill:#ddd"');
  s += '<rect x="1482" y="810" width="22" height="17" fill="#2e2e2e" stroke="#444"/><path d="M1490 815v7l5.500-3.500z" fill="none" stroke="#ccc"/>';
  s += rect(1504, 817, 247.500, 3, '#8a8a8a') + rect(1504, 817, 40, 3, '#3350ff');
  for (let i = 0; i < 7; i++) s += rect(1571.8 + i * 27.6, 817, 1, 3, '#3350ff');
  s += rect(1542.300, 811.500, 5, 14.500, '#e8e8e8') + text(1757, 822, '2018', 'ax', 'style="font-size:10px;fill:#ddd"');
  s += grid(1484, 2156, [837.5, 869.5, 900.5, 929, 956, 983, 1007.5, 1033]);
  s += `<path d="${[1484, 1567.5, 1651.5, 1735.5, 1819.5, 1903.5, 1987.5, 2071.5, 2155.5].map(x => `M${x} 837V1061`).join('')}M1484 1061H2156" stroke="#4a4a4a" fill="none"/>`;
  ['4.0', '3.5', '3.0', '2.5', '2.0', '1.5', '0.1', '0.5', '0'].forEach((t, i) => s += text(1478, [838.7, 867.3, 897, 925.3, 952.7, 979.3, 1002.7, 1030.3, 1058.7][i] + 2.7, t, 'ax end'));
  ['0', '10,000', '20,000', '30,000', '40,000', '50,000', '60,000', '70,000', '80,000'].forEach((t, i) => s += text([1486, 1567.4, 1649.5, 1736, 1820, 1903, 1988, 2071, 2142][i], 1076.7, t, 'ax mid', 'style="font-size:8.300px"'));
  const c = (x, y, r, f, o, st) => `<circle cx="${x}" cy="${y}" r="${r}" fill="${f}" fill-opacity="${o}"${st ? ` stroke="${st}" stroke-width="1.200"` : ''}/>`;
  [[1675.5, 863.7], [1753.6, 868.3], [1652.9, 894], [1787.5, 882.7], [1797.3, 873.3], [1753.6, 908.3], [1617, 941.7], [1738.9, 941.7], [1753.6, 945.3], [1744.3, 955.7], [1773.2, 931]].forEach(p => s += c(...p, 7.8, '#969696', 1));
  s += c(1872.4, 930, 18.2, '#0bc4c8', .5) + c(1837.6, 880.3, 39, '#fff', .46, '#d8d8d8') + c(1797.8, 955.7, 33, BLUE, .5, BLUE);
  [[1835.6, 880.7], [1849.4, 901.7], [1864.6, 900.7]].forEach(p => s += c(...p, 7.8, '#cfcfcf', .75));
  s += c(1853.8, 923.3, 7.8, '#969696', 1) + c(1777.700, 941.7, 7.8, '#9a9ad0', .7) + c(1735.4, 989, 25, PURPLE, .45, PURPLE) + c(1867, 1002.7, 48, YELLOW, .45, YELLOW);
  [['DE', 1837.6, 883.3], ['UK', 1797.8, 958.7], ['LK', 1736.500, 992], ['IN', 1867, 1005.5]].forEach(([t, x, y]) => s += text(x, y, t, 'tx mid', 'style="fill:#fff"'));
  s += rot(1451, 1003, 'GHG emissions per GDP', 'tx lt', 110);
  s += '<text x="1819.400" y="1095.500" class="tx mid" style="font-size:10px" textLength="111"><tspan font-weight="600">GDP per</tspan> <tspan font-weight="400">&lt;USD&gt; 1 million</tspan></text>';
  [[1651.4, BLUE, 'United Kingdom', 62], [1734.4, WHITE, 'Germany', 35], [1792.4, YELLOW, 'India', 19], [1832.6, PURPLE, 'Sri Lanka', 35], [1889.2, CYAN, 'Lower middle income', 82]].forEach(([x, f, t, w]) => s += rect(x, 1110.3, 9, 9, f) + text(x + 12.8, 1117.5, t, 'tx', `textLength="${w}"`));
  $('corrchart').innerHTML = s;
})();

// Right history chart; series points are in a 1568 x 750 plot space
(() => {
  const K = 1568 / 780;
  let s = grid(1511, 2132, [1208.5, 1233, 1256.5, 1280.5, 1308, 1330, 1352.5]);
  [1207.7, 1231.7, 1255.7, 1280, 1304, 1328.3, 1352.3].forEach((y, i) => s += text(1502, y + 2.8, 600 - i * 100, 'ax end', 'style="fill:#8f8f8f;font-size:8.500px"'));
  s += text(1502, 1379.3, '-100', 'ax end');
  s += `<g class="ln" transform="translate(1425 1130) scale(${1 / K} .3333)">`;
  const line = (col, cls, d) => `<path class="${cls}" stroke="${col}" d="M${d}"/>`;
  s += line('#a06ae0', 'dash', '208 505L300 500 330 507 362 502 384 511 410 509 466 513 490 502 516 498 540 501 572 499 600 504 620 496 650 499 700 518 740 517 766 512 800 516 840 510 880 505 925 506 950 500 990 530 1030 530 1050 522 1090 515 1130 528 1180 520 1240 518 1330 518 1396 512');
  s += line('#ffcb00', 'dash', '208 439L305 445 330 455 362 454 384 464 415 467 466 475 490 469 516 467 540 472 572 476 600 483 620 478 655 485 700 507 766 510 790 516 840 517 885 514 925 521 962 527 992 551 1020 554 1050 549 1090 548 1127 563 1175 560 1205 567 1240 567 1325 576 1396 577');
  s += line('#fff', 'dash', '208 395L305 402 330 410 362 409 384 419 415 422 466 431 490 425 516 423 540 428 572 431 600 438 620 433 645 437 M670 450L700 463 766 466 790 471 840 472 885 470 962 483 990 506 1008 508 M1032 508L1050 505 1090 504 M1122 518L1180 515 M1215 522L1275 526 M1300 532L1396 534');
  s += line(BLUE, '', '208 416L265 418 305 417 330 431 362 427 384 441 400 446 417 444 442 448 466 454 490 440 516 434 536 441 572 442 600 452 622 442 643 447 M670 463L700 486 740 486 766 484 795 492 840 489 884 481 925 486 962 491 996 535 1030 536 1052 526 1093 520 1130 542 1180 533 1205 541 1235 537 1285 541 1330 546 1398 542');
  s += '</g>';
  [[96, 234, 362], [96, 310, 370], [96, 399, 391], [96, 467, 399], [96, 572, 401], [92, 659, 426], [77, 657, 451], [82, 729, 437], [82, 846, 438], [67, 937, 503], [67, 1020, 498], [67, 1107, 507], [67, 1193, 516], [67, 1286, 518]].forEach(([t, x, y]) => s += text((1425 + x / K).toFixed(1), (1130 + y / 3 + 3).toFixed(1), t, 'ax mid', 'style="font-size:8.500px"'));
  s += rot(1449.300, 1352, 'GHG emissions&nbsp; per GDP', 'tx lt', 111) + rot(1464.800, 1368, '(tCo2e / constant 2010 EUR 1M)', 'tx lt', 143);
  $('linechart').innerHTML = s;
})();
```
